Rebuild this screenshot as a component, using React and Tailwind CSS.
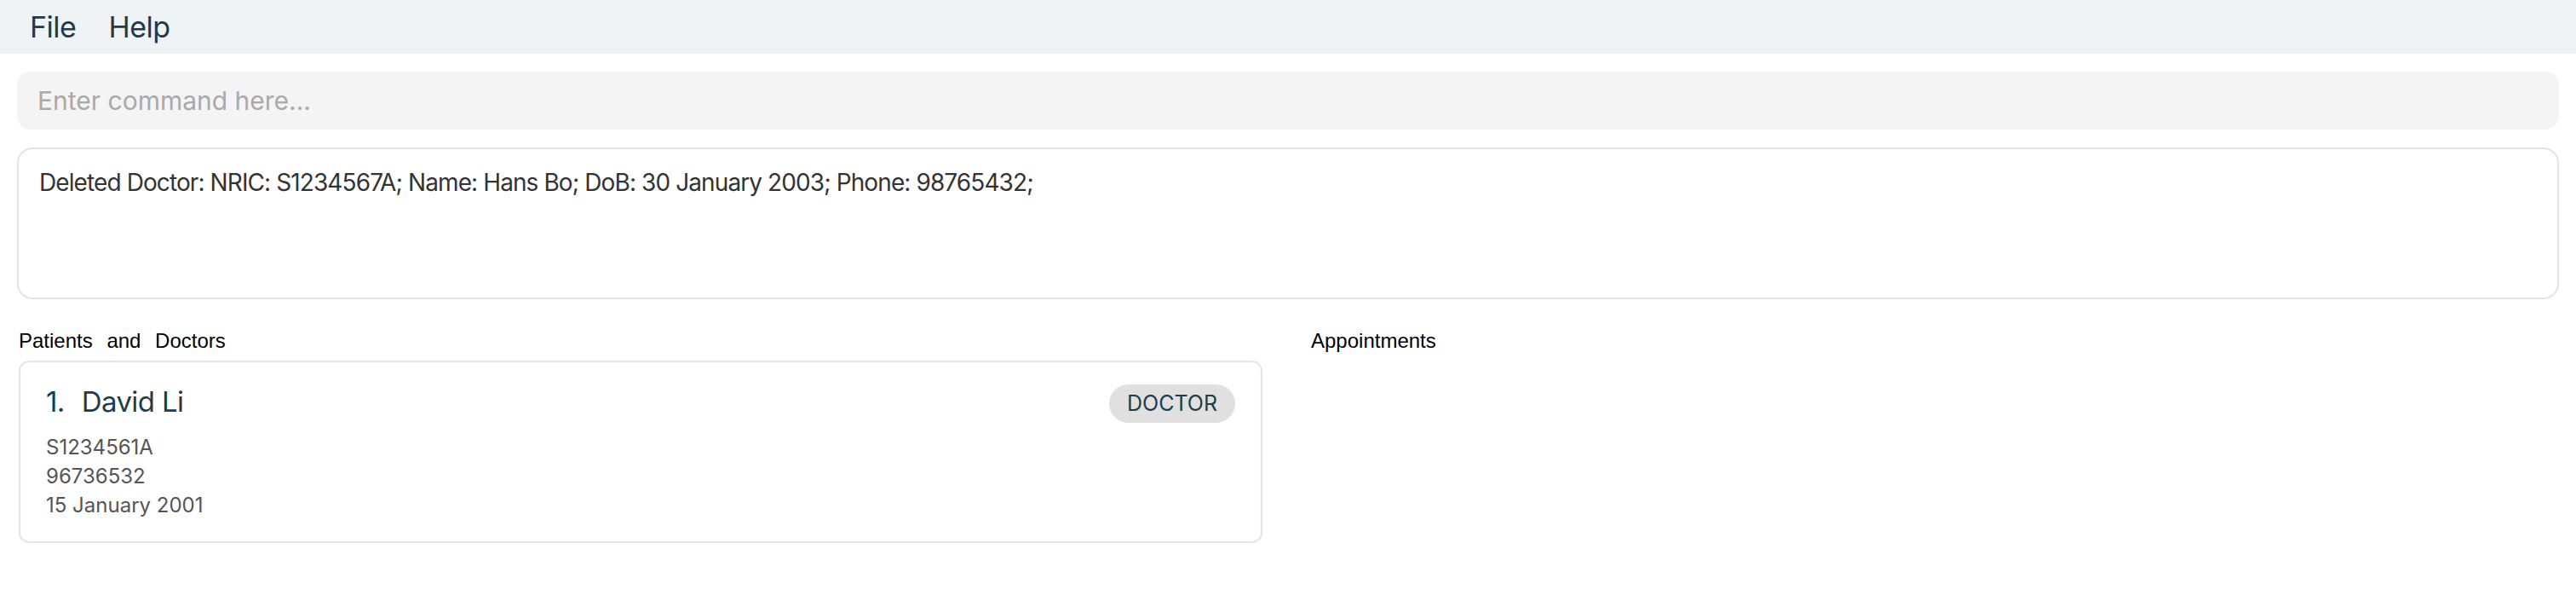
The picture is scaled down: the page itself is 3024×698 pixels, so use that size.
export default function App() {
    return (
        <div className="min-h-screen bg-white font-['Inter',sans-serif]">
            {/* Menu bar */}
            <div className="flex h-[63px] items-center gap-[38px] bg-[#eff3f5] px-[35px] text-[34px] tracking-[-0.5px] text-[#1d3b4a]">
                <span>File</span>
                <span>Help</span>
            </div>

            <div className="px-[20px] pt-[21px]">
                {/* Command box */}
                <div className="flex h-[68px] items-center rounded-[16px] bg-[#f4f4f4] px-[24px] text-[30px] text-[#a9a9a9]">
                    Enter command here...
                </div>

                {/* Result display */}
                <div className="mt-[21px] h-[178px] rounded-[18px] border-2 border-[#e1e4ee] px-[24px] pt-[18px] text-[28px] tracking-[-0.9px] text-[#333333]">
                    Deleted Doctor: NRIC: S1234567A; Name: Hans Bo; DoB: 30 January 2003; Phone: 98765432;
                </div>

                {/* Lists */}
                <div className="mt-[36px] flex">
                    <div className="w-[1462px] pl-[2px]">
                        <div className="font-['Liberation_Sans',sans-serif] text-[24px] leading-[26px] text-black [word-spacing:10px]">
                            Patients and Doctors
                        </div>
                        <div className="mt-[10px] flex items-start justify-between rounded-[12px] border-2 border-[#e1e4ee] pb-[25px] pl-[30px] pr-[30px] pt-[24px]">
                            <div>
                                <div className="text-[33px] leading-[44px] tracking-[-0.6px] text-[#1e3d4c]">
                                    1.<span className="ml-[20px]">David Li</span>
                                </div>
                                <div className="mt-[15px] text-[24px] leading-[34px] text-[#555555]">
                                    <div>S1234561A</div>
                                    <div>96736532</div>
                                    <div>15 January 2001</div>
                                </div>
                            </div>
                            <div className="mt-[2px] flex h-[45px] items-center rounded-full bg-[#e0e0e0] px-[21px] text-[25px] text-[#1e3d4c]">
                                DOCTOR
                            </div>
                        </div>
                    </div>
                    <div className="ml-[57px] flex-1">
                        <div className="font-['Liberation_Sans',sans-serif] text-[24px] leading-[26px] text-black">
                            Appointments
                        </div>
                    </div>
                </div>
            </div>
        </div>
    );
}
